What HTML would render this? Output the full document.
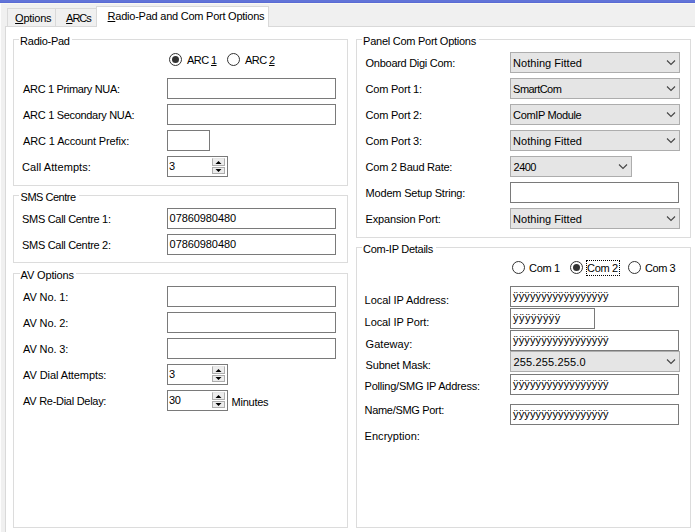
<!DOCTYPE html>
<html><head><meta charset="utf-8"><style>
html,body{margin:0;padding:0;}
body{width:695px;height:532px;overflow:hidden;position:relative;background:#f0f0f0;font-family:"Liberation Sans",sans-serif;font-size:11px;color:#000;}
body>div,body>svg{position:absolute;}
.t{white-space:pre;line-height:13px;}
u{text-decoration:underline;text-underline-offset:1px;}
</style></head><body>
<div style="left:0;top:0;width:695px;height:2px;background:#6274d8"></div>
<div style="left:0;top:2px;width:695px;height:1px;background:#5a6bd4"></div>
<div style="left:0;top:3px;width:695px;height:1px;background:#faf9f3"></div>
<div style="left:0;top:3px;width:1px;height:529px;background:#fdfdfd"></div>
<div style="left:7px;top:8px;width:49px;height:20px;border:1px solid #d9d9d9;background:#f0f0f0;box-sizing:border-box;"></div>
<div style="left:55px;top:8px;width:42px;height:20px;border:1px solid #d9d9d9;background:#f0f0f0;box-sizing:border-box;"></div>
<div style="left:5px;top:26px;width:716px;height:535px;border:1px solid #d9d9d9;background:#fff;box-sizing:border-box;"></div>
<div style="left:96px;top:6px;width:173px;height:21px;box-sizing:border-box;border:1px solid #d9d9d9;border-bottom:none;background:#fff"></div>
<div class="t" style="left:15.10px;top:12px;letter-spacing:-0.250px;"><u>O</u>ptions</div>
<div class="t" style="left:66.10px;top:12px;letter-spacing:-1.033px;"><u>A</u>RCs</div>
<div class="t" style="left:107.60px;top:10px;letter-spacing:-0.238px;"><u>R</u>adio-Pad and Com Port Options</div>
<div style="left:13px;top:39px;width:335px;height:147px;border:1px solid #dcdcdc;background:transparent;box-sizing:border-box;"></div>
<div style="left:19px;top:39px;width:53px;height:1px;background:#fff"></div>
<div class="t" style="left:20.10px;top:35px;letter-spacing:-0.262px;">Radio-Pad</div>
<div style="left:169px;top:53px;width:13px;height:13px;box-sizing:border-box;border:1px solid #333;border-radius:50%;background:#fff"></div>
<div style="left:172px;top:56px;width:7px;height:7px;border-radius:50%;background:#333"></div>
<div class="t" style="left:187.10px;top:54px;letter-spacing:-0.600px;">ARC <u>1</u></div>
<div style="left:227px;top:53px;width:13px;height:13px;box-sizing:border-box;border:1px solid #333;border-radius:50%;background:#fff"></div>
<div class="t" style="left:245.10px;top:54px;letter-spacing:-0.600px;">ARC <u>2</u></div>
<div class="t" style="left:23.10px;top:83px;letter-spacing:-0.341px;">ARC 1 Primary NUA:</div>
<div class="t" style="left:23.10px;top:109px;letter-spacing:-0.311px;">ARC 1 Secondary NUA:</div>
<div class="t" style="left:23.10px;top:135px;letter-spacing:-0.135px;">ARC 1 Account Prefix:</div>
<div class="t" style="left:22.10px;top:161px;letter-spacing:0.069px;">Call Attempts:</div>
<div style="left:167px;top:78px;width:169px;height:21px;border:1px solid #7a7a7a;background:#fff;box-sizing:border-box;"></div>
<div style="left:167px;top:104px;width:169px;height:21px;border:1px solid #7a7a7a;background:#fff;box-sizing:border-box;"></div>
<div style="left:167px;top:130px;width:43px;height:21px;border:1px solid #7a7a7a;background:#fff;box-sizing:border-box;"></div>
<div style="left:167px;top:156px;width:61px;height:21px;border:1px solid #7a7a7a;background:#fff;box-sizing:border-box;"></div>
<div class="t" style="left:169.00px;top:160px;letter-spacing:-0.300px;">3</div>
<div style="left:212px;top:158px;width:13px;height:8px;box-sizing:border-box;border:1px solid #adadad;border-top-color:#e6e6e6;background:#ececec"></div>
<div style="left:212px;top:167px;width:13px;height:7px;box-sizing:border-box;border:1px solid #adadad;background:#ececec"></div>
<svg style="left:212px;top:158px" width="13" height="17"><path d="M3.5 6h6l-3-3z M3.5 11h6l-3 3z" fill="#000"/></svg>
<div style="left:13px;top:195px;width:335px;height:68px;border:1px solid #dcdcdc;background:transparent;box-sizing:border-box;"></div>
<div style="left:19px;top:195px;width:60px;height:1px;background:#fff"></div>
<div class="t" style="left:20.60px;top:191px;letter-spacing:-0.489px;">SMS Centre</div>
<div class="t" style="left:22.10px;top:213px;letter-spacing:-0.312px;">SMS Call Centre 1:</div>
<div class="t" style="left:22.10px;top:239px;letter-spacing:-0.312px;">SMS Call Centre 2:</div>
<div style="left:167px;top:208px;width:169px;height:21px;border:1px solid #7a7a7a;background:#fff;box-sizing:border-box;"></div>
<div class="t" style="left:169.60px;top:212px;letter-spacing:-0.080px;">07860980480</div>
<div style="left:167px;top:234px;width:169px;height:21px;border:1px solid #7a7a7a;background:#fff;box-sizing:border-box;"></div>
<div class="t" style="left:169.60px;top:238px;letter-spacing:-0.080px;">07860980480</div>
<div style="left:13px;top:273px;width:335px;height:255px;border:1px solid #dcdcdc;background:transparent;box-sizing:border-box;"></div>
<div style="left:20px;top:273px;width:56px;height:1px;background:#fff"></div>
<div class="t" style="left:20.60px;top:269px;letter-spacing:-0.156px;">AV Options</div>
<div class="t" style="left:23.10px;top:291px;letter-spacing:-0.138px;">AV No. 1:</div>
<div class="t" style="left:23.10px;top:317px;letter-spacing:-0.138px;">AV No. 2:</div>
<div class="t" style="left:23.10px;top:343px;letter-spacing:-0.138px;">AV No. 3:</div>
<div class="t" style="left:23.10px;top:369px;letter-spacing:-0.094px;">AV Dial Attempts:</div>
<div class="t" style="left:23.10px;top:395px;letter-spacing:-0.281px;">AV Re-Dial Delay:</div>
<div style="left:167px;top:286px;width:169px;height:21px;border:1px solid #7a7a7a;background:#fff;box-sizing:border-box;"></div>
<div style="left:167px;top:312px;width:169px;height:21px;border:1px solid #7a7a7a;background:#fff;box-sizing:border-box;"></div>
<div style="left:167px;top:338px;width:169px;height:21px;border:1px solid #7a7a7a;background:#fff;box-sizing:border-box;"></div>
<div style="left:167px;top:364px;width:61px;height:21px;border:1px solid #7a7a7a;background:#fff;box-sizing:border-box;"></div>
<div class="t" style="left:169.00px;top:368px;letter-spacing:-0.300px;">3</div>
<div style="left:212px;top:366px;width:13px;height:8px;box-sizing:border-box;border:1px solid #adadad;border-top-color:#e6e6e6;background:#ececec"></div>
<div style="left:212px;top:375px;width:13px;height:7px;box-sizing:border-box;border:1px solid #adadad;background:#ececec"></div>
<svg style="left:212px;top:366px" width="13" height="17"><path d="M3.5 6h6l-3-3z M3.5 11h6l-3 3z" fill="#000"/></svg>
<div style="left:167px;top:390px;width:61px;height:21px;border:1px solid #7a7a7a;background:#fff;box-sizing:border-box;"></div>
<div class="t" style="left:169.00px;top:394px;letter-spacing:-0.300px;">30</div>
<div style="left:212px;top:392px;width:13px;height:8px;box-sizing:border-box;border:1px solid #adadad;border-top-color:#e6e6e6;background:#ececec"></div>
<div style="left:212px;top:401px;width:13px;height:7px;box-sizing:border-box;border:1px solid #adadad;background:#ececec"></div>
<svg style="left:212px;top:392px" width="13" height="17"><path d="M3.5 6h6l-3-3z M3.5 11h6l-3 3z" fill="#000"/></svg>
<div class="t" style="left:231.60px;top:396px;letter-spacing:-0.250px;">Minutes</div>
<div style="left:356px;top:39px;width:335px;height:199px;border:1px solid #dcdcdc;background:transparent;box-sizing:border-box;"></div>
<div style="left:362px;top:39px;width:117px;height:1px;background:#fff"></div>
<div class="t" style="left:363.10px;top:35px;letter-spacing:-0.262px;">Panel Com Port Options</div>
<div class="t" style="left:365.60px;top:57px;letter-spacing:-0.281px;">Onboard Digi Com:</div>
<div class="t" style="left:365.60px;top:83px;letter-spacing:-0.220px;">Com Port 1:</div>
<div class="t" style="left:365.60px;top:109px;letter-spacing:-0.220px;">Com Port 2:</div>
<div class="t" style="left:365.60px;top:135px;letter-spacing:-0.220px;">Com Port 3:</div>
<div class="t" style="left:365.60px;top:161px;letter-spacing:-0.247px;">Com 2 Baud Rate:</div>
<div class="t" style="left:365.60px;top:187px;letter-spacing:-0.200px;">Modem Setup String:</div>
<div class="t" style="left:365.60px;top:213px;letter-spacing:-0.171px;">Expansion Port:</div>
<div style="left:510px;top:52px;width:170px;height:21px;border:1px solid #adadad;background:#e5e5e5;box-sizing:border-box;"></div>
<div class="t" style="left:513.10px;top:57px;letter-spacing:0.031px;">Nothing Fitted</div>
<svg style="left:666px;top:58px" width="10" height="8"><path d="M1 2.5l4 4 4-4" fill="none" stroke="#444" stroke-width="1.1"/></svg>
<div style="left:510px;top:78px;width:170px;height:21px;border:1px solid #adadad;background:#e5e5e5;box-sizing:border-box;"></div>
<div class="t" style="left:513.10px;top:83px;letter-spacing:-0.543px;">SmartCom</div>
<svg style="left:666px;top:84px" width="10" height="8"><path d="M1 2.5l4 4 4-4" fill="none" stroke="#444" stroke-width="1.1"/></svg>
<div style="left:510px;top:104px;width:170px;height:21px;border:1px solid #adadad;background:#e5e5e5;box-sizing:border-box;"></div>
<div class="t" style="left:513.10px;top:109px;letter-spacing:-0.364px;">ComIP Module</div>
<svg style="left:666px;top:110px" width="10" height="8"><path d="M1 2.5l4 4 4-4" fill="none" stroke="#444" stroke-width="1.1"/></svg>
<div style="left:510px;top:130px;width:170px;height:21px;border:1px solid #adadad;background:#e5e5e5;box-sizing:border-box;"></div>
<div class="t" style="left:513.10px;top:135px;letter-spacing:0.031px;">Nothing Fitted</div>
<svg style="left:666px;top:136px" width="10" height="8"><path d="M1 2.5l4 4 4-4" fill="none" stroke="#444" stroke-width="1.1"/></svg>
<div style="left:510px;top:156px;width:122px;height:21px;border:1px solid #adadad;background:#e5e5e5;box-sizing:border-box;"></div>
<div class="t" style="left:513.60px;top:161px;letter-spacing:-0.533px;">2400</div>
<svg style="left:618px;top:162px" width="10" height="8"><path d="M1 2.5l4 4 4-4" fill="none" stroke="#444" stroke-width="1.1"/></svg>
<div style="left:510px;top:182px;width:169px;height:21px;border:1px solid #7a7a7a;background:#fff;box-sizing:border-box;"></div>
<div style="left:510px;top:208px;width:170px;height:21px;border:1px solid #adadad;background:#e5e5e5;box-sizing:border-box;"></div>
<div class="t" style="left:513.10px;top:213px;letter-spacing:0.031px;">Nothing Fitted</div>
<svg style="left:666px;top:214px" width="10" height="8"><path d="M1 2.5l4 4 4-4" fill="none" stroke="#444" stroke-width="1.1"/></svg>
<div style="left:356px;top:247px;width:335px;height:281px;border:1px solid #dcdcdc;background:transparent;box-sizing:border-box;"></div>
<div style="left:362px;top:247px;width:74px;height:1px;background:#fff"></div>
<div class="t" style="left:363.10px;top:243px;letter-spacing:-0.277px;">Com-IP Details</div>
<div style="left:512px;top:261px;width:13px;height:13px;box-sizing:border-box;border:1px solid #333;border-radius:50%;background:#fff"></div>
<div class="t" style="left:529.10px;top:262px;letter-spacing:-0.350px;">Com 1</div>
<div style="left:570px;top:261px;width:13px;height:13px;box-sizing:border-box;border:1px solid #333;border-radius:50%;background:#fff"></div>
<div style="left:573px;top:264px;width:7px;height:7px;border-radius:50%;background:#333"></div>
<div class="t" style="left:587.10px;top:262px;letter-spacing:-0.350px;">Com 2</div>
<div style="left:586px;top:260px;width:34px;height:16px;box-sizing:border-box;border:1px dotted #000"></div>
<div style="left:628px;top:261px;width:13px;height:13px;box-sizing:border-box;border:1px solid #333;border-radius:50%;background:#fff"></div>
<div class="t" style="left:645.10px;top:262px;letter-spacing:-0.475px;">Com 3</div>
<div class="t" style="left:364.60px;top:294px;letter-spacing:-0.063px;">Local IP Address:</div>
<div class="t" style="left:364.60px;top:316px;letter-spacing:-0.085px;">Local IP Port:</div>
<div class="t" style="left:365.60px;top:338px;letter-spacing:0.029px;">Gateway:</div>
<div class="t" style="left:365.60px;top:359px;letter-spacing:-0.182px;">Subnet Mask:</div>
<div class="t" style="left:364.60px;top:380px;letter-spacing:-0.218px;">Polling/SMG IP Address:</div>
<div class="t" style="left:364.60px;top:404px;letter-spacing:-0.315px;">Name/SMG Port:</div>
<div class="t" style="left:364.60px;top:430px;letter-spacing:0.030px;">Encryption:</div>
<div style="left:510px;top:286px;width:169px;height:21px;border:1px solid #7a7a7a;background:#fff;box-sizing:border-box;"></div>
<div class="t" style="left:513.10px;top:290px;letter-spacing:0.125px;">&#255;&#255;&#255;&#255;&#255;&#255;&#255;&#255;&#255;&#255;&#255;&#255;&#255;&#255;&#255;&#255;&#255;</div>
<div style="left:510px;top:308px;width:85px;height:21px;border:1px solid #7a7a7a;background:#fff;box-sizing:border-box;"></div>
<div class="t" style="left:513.10px;top:312px;letter-spacing:0.457px;">&#255;&#255;&#255;&#255;&#255;&#255;&#255;&#255;</div>
<div style="left:510px;top:330px;width:169px;height:21px;border:1px solid #7a7a7a;background:#fff;box-sizing:border-box;"></div>
<div class="t" style="left:513.10px;top:334px;letter-spacing:0.125px;">&#255;&#255;&#255;&#255;&#255;&#255;&#255;&#255;&#255;&#255;&#255;&#255;&#255;&#255;&#255;&#255;&#255;</div>
<div style="left:510px;top:351px;width:170px;height:21px;border:1px solid #adadad;background:#e5e5e5;box-sizing:border-box;"></div>
<div class="t" style="left:513.60px;top:356px;letter-spacing:0.142px;">255.255.255.0</div>
<svg style="left:666px;top:357px" width="10" height="8"><path d="M1 2.5l4 4 4-4" fill="none" stroke="#444" stroke-width="1.1"/></svg>
<div style="left:510px;top:374px;width:169px;height:21px;border:1px solid #7a7a7a;background:#fff;box-sizing:border-box;"></div>
<div class="t" style="left:513.10px;top:378px;letter-spacing:0.125px;">&#255;&#255;&#255;&#255;&#255;&#255;&#255;&#255;&#255;&#255;&#255;&#255;&#255;&#255;&#255;&#255;&#255;</div>
<div style="left:510px;top:404px;width:169px;height:21px;border:1px solid #7a7a7a;background:#fff;box-sizing:border-box;"></div>
<div class="t" style="left:513.10px;top:408px;letter-spacing:0.125px;">&#255;&#255;&#255;&#255;&#255;&#255;&#255;&#255;&#255;&#255;&#255;&#255;&#255;&#255;&#255;&#255;&#255;</div>
</body></html>
